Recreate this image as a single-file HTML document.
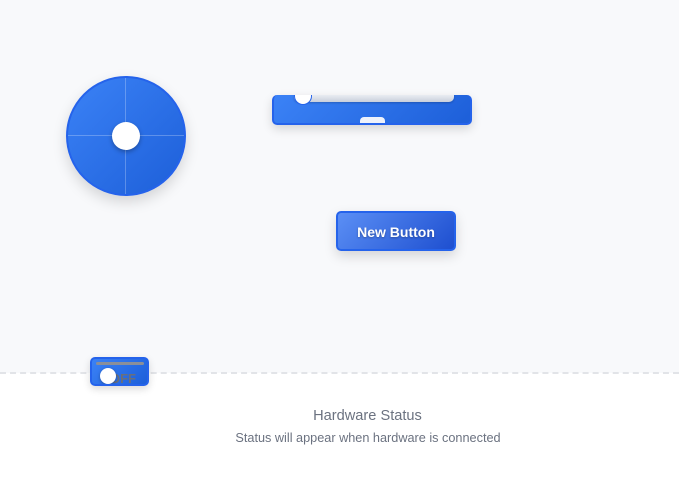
<!DOCTYPE html>
<html><head><style>
html,body{margin:0;padding:0}
body{width:679px;height:497px;position:relative;overflow:hidden;background:#fff;font-family:"Liberation Sans",sans-serif}
.top{position:absolute;left:0;top:0;width:679px;height:373px;background:#f8f9fb}
.dash{position:absolute;left:0;top:372px;width:679px;border-top:2px dashed #e2e4e8}
.joy{position:absolute;left:66px;top:76px;width:116px;height:116px;border-radius:50%;background:linear-gradient(135deg,#3b82f6,#1d5fd9);border:2px solid #2563eb;box-shadow:0 6px 14px rgba(0,0,0,.15)}
.joy .h{position:absolute;left:0;top:57px;width:116px;height:1px;background:rgba(255,255,255,.25)}
.joy .v{position:absolute;top:0;left:57px;height:116px;width:1px;background:rgba(255,255,255,.25)}
.knob{position:absolute;left:44px;top:44px;width:28px;height:28px;border-radius:50%;background:#fff;box-shadow:0 2px 5px rgba(0,0,0,.3)}
.sl{position:absolute;left:272px;top:95px;width:196px;height:28px;border-radius:5px;background:linear-gradient(135deg,#3b82f6,#1d5fd9);border:2px solid #2563eb;border-top:none;box-shadow:0 4px 10px rgba(0,0,0,.15);overflow:hidden}
.track{position:absolute;left:20px;top:0;width:160px;height:7px;background:linear-gradient(#e9ecf2,#c9cfdb);border-radius:0 0 5px 5px;box-shadow:0 1px 2px rgba(0,0,0,.2)}
.thumb{position:absolute;left:20px;top:-8px;width:16px;height:16px;border-radius:50%;background:#fff;border:1px solid #2563eb}
.tab{position:absolute;left:86px;top:22px;width:25px;height:8px;background:#eef2fb;border-radius:4px 4px 0 0}
.btn{position:absolute;left:336px;top:211px;width:116px;height:36px;border-radius:5px;background:linear-gradient(135deg,#5b8ff5,#1e4fd0);border:2px solid #2563eb;box-shadow:0 5px 12px rgba(0,0,0,.15);color:#fff;font-weight:bold;font-size:14px;line-height:38px;text-align:center;text-shadow:0 1px 2px rgba(0,0,0,.3)}
.tg{position:absolute;left:90px;top:357px;width:55px;height:25px;border-radius:5px;background:linear-gradient(135deg,#3b82f6,#1d5fd9);border:2px solid #2563eb;box-shadow:0 3px 8px rgba(0,0,0,.15);overflow:hidden}
.tg .bar{position:absolute;left:4px;top:3px;width:48px;height:3px;background:#8a8f99;border-radius:2px}
.tg .off{position:absolute;left:18px;top:12px;font-size:13px;font-weight:bold;color:#6a6f7a}
.tg .k{position:absolute;left:8px;top:9px;width:16px;height:16px;border-radius:50%;background:#fff;box-shadow:0 1px 3px rgba(0,0,0,.3)}
.t1{position:absolute;left:0;width:679px;top:408px;text-align:center;font-size:14.6px;color:#6b7280;padding-left:56px;box-sizing:border-box}
.t2{position:absolute;left:0;width:679px;top:431px;text-align:center;font-size:12.7px;color:#6b7280;padding-left:57px;box-sizing:border-box}
</style></head><body>
<div class="top"></div><div class="dash"></div>
<div class="joy"><div class="h"></div><div class="v"></div><div class="knob"></div></div>
<div class="sl"><div class="track"></div><div class="thumb"></div><div class="tab"></div></div>
<div class="btn">New Button</div>
<div class="tg"><div class="bar"></div><div class="off">OFF</div><div class="k"></div></div>
<div class="t1">Hardware Status</div>
<div class="t2">Status will appear when hardware is connected</div>
</body></html>
